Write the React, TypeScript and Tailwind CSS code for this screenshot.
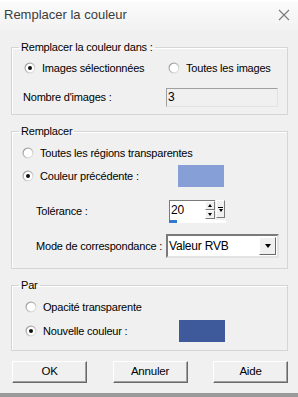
import React from 'react'

const font = { fontFamily: '"Liberation Sans", Arial, sans-serif' }

function Radio({ checked }: { checked?: boolean }) {
  return (
    <svg width="12" height="12" viewBox="0 0 12 12" className="shrink-0">
      <defs>
        <linearGradient id="rg" x1="0" y1="0" x2="1" y2="1">
          <stop offset="0" stopColor="#8a8a8a" />
          <stop offset="1" stopColor="#f4f4f4" />
        </linearGradient>
      </defs>
      <circle cx="6" cy="6" r="5.5" fill="url(#rg)" />
      <circle cx="6" cy="6" r="4.3" fill="#ffffff" />
      {checked && <circle cx="6" cy="6" r="2" fill="#111111" />}
    </svg>
  )
}

function Legend({ children }: { children: React.ReactNode }) {
  return <legend className="ml-[7px] px-[2px] leading-[14px] whitespace-nowrap">{children}</legend>
}

function Swatch({ color }: { color: string }) {
  return <div className={`w-[46px] h-[22px] shrink-0 ${color}`} />
}

function Button({ label }: { label: string }) {
  return (
    <button className="w-[75px] h-[22px] bg-[#f0f0f0] border border-t-white border-l-white border-r-[#696969] border-b-[#696969] shadow-[inset_-1px_-1px_0_#a0a0a0] leading-none text-[11.5px]">
      {label}
    </button>
  )
}

export default function App() {
  return (
    <div className="w-[298px] h-[397px] bg-[#f0f0f0] text-[11px] tracking-[-0.2px] text-black overflow-hidden flex flex-col border-b-[4px] border-b-[#9a9a9a] whitespace-nowrap" style={font}>
      {/* title bar */}
      <div className="h-[30px] flex items-center justify-between pl-[4px] pr-[8px] bg-gradient-to-b from-[#fbfbfb] to-[#f2f2f2] border-t-[2px] border-t-[#fdfdfd] tracking-normal">
        <span className="text-[13px] text-[#3c3c3c] pb-[2px]">Remplacer la couleur</span>
        <svg width="12" height="12" viewBox="0 0 12 12" className="mb-[3px]">
          <path d="M1 1 L11 11 M11 1 L1 11" stroke="#7a7a7a" strokeWidth="1.1" />
        </svg>
      </div>

      <div className="flex flex-col px-[11px] pt-[10px]">
        {/* group 1 */}
        <fieldset className="w-[277px] h-[75px] border border-[#d5d5d5] shadow-[inset_1px_1px_0_#ffffff]">
          <Legend>Remplacer la couleur dans :</Legend>
          <div className="flex items-center h-[16px] mt-[6px] pl-[12px]">
            <Radio checked />
            <span className="ml-[6px] w-[126px]">Images sélectionnées</span>
            <Radio />
            <span className="ml-[6px]">Toutes les images</span>
          </div>
          <div className="flex items-center mt-[12px] pl-[11px]">
            <span className="w-[143px]">Nombre d'images :</span>
            <div className="w-[112px] h-[19px] bg-[#f0f0f0] border border-[#a0a0a0] border-r-[#e3e3e3] border-b-[#e3e3e3] pl-[1px] leading-[17px] text-[12px]">
              3
            </div>
          </div>
        </fieldset>

        {/* group 2 */}
        <fieldset className="w-[277px] h-[145px] mt-[9px] border border-[#d5d5d5] shadow-[inset_1px_1px_0_#ffffff]">
          <Legend>Remplacer</Legend>
          <div className="flex items-center h-[16px] mt-[7px] pl-[10px]">
            <Radio />
            <span className="ml-[6px]">Toutes les régions transparentes</span>
          </div>
          <div className="flex items-center mt-[4px] pl-[10px]">
            <Radio checked />
            <span className="ml-[6px] w-[138px]">Couleur précédente :</span>
            <Swatch color="bg-[#869fd7]" />
          </div>
          <div className="flex items-start mt-[13px] pl-[24px]">
            <span className="w-[133px] pt-[3px]">Tolérance :</span>
            <div className="flex flex-col">
              <div className="flex items-start">
                <div className="w-[46px] h-[20px] bg-white border border-[#7a7a7a] border-r-0 border-b-0 flex">
                  <span className="pl-[1px] leading-[18px] flex-1 text-[12px]">20</span>
                  <div className="w-[10px] flex flex-col">
                    <div className="h-[9px] bg-[#f0f0f0] border border-t-white border-l-white border-r-[#7a7a7a] border-b-[#7a7a7a] flex items-center justify-center">
                      <div className="w-0 h-0 border-l-[2.5px] border-r-[2.5px] border-b-[3px] border-l-transparent border-r-transparent border-b-black" />
                    </div>
                    <div className="h-[9px] bg-[#f0f0f0] border border-t-white border-l-white border-r-[#7a7a7a] border-b-[#7a7a7a] flex items-center justify-center">
                      <div className="w-0 h-0 border-l-[2.5px] border-r-[2.5px] border-t-[3px] border-l-transparent border-r-transparent border-t-black" />
                    </div>
                  </div>
                </div>
                <div className="ml-[1px] w-[9px] h-[18px] bg-[#f0f0f0] border border-t-white border-l-white border-r-[#7a7a7a] border-b-[#7a7a7a] flex flex-col items-center justify-center gap-[1px]">
                  <div className="w-[5px] h-px bg-black" />
                  <div className="w-0 h-0 border-l-[2.5px] border-r-[2.5px] border-t-[3px] border-l-transparent border-r-transparent border-t-black" />
                </div>
              </div>
              <div className="w-[57px] h-[3px] bg-white flex">
                <div className="w-[8px] h-[3px] bg-[#2e7bd0]" />
              </div>
            </div>
          </div>
          <div className="flex items-center mt-[11px] pl-[24px]">
            <span className="w-[130px]">Mode de correspondance :</span>
            <div className="w-[113px] h-[24px] bg-white border-2 border-t-[#7a7a7a] border-l-[#7a7a7a] border-r-[#e3e3e3] border-b-[#e3e3e3] flex items-center">
              <span className="flex-1 pl-[1px] text-[12px]">Valeur RVB</span>
              <div className="w-[17px] h-[18px] mr-[1px] bg-[#f0f0f0] border border-t-white border-l-white border-r-[#696969] border-b-[#696969] flex items-center justify-center">
                <div className="w-0 h-0 border-l-[3.5px] border-r-[3.5px] border-t-[4px] border-l-transparent border-r-transparent border-t-black" />
              </div>
            </div>
          </div>
        </fieldset>

        {/* group 3 */}
        <fieldset className="w-[277px] h-[73px] mt-[9px] border border-[#d5d5d5] shadow-[inset_1px_1px_0_#ffffff]">
          <Legend>Par</Legend>
          <div className="flex items-center h-[16px] mt-[7px] pl-[13px]">
            <Radio />
            <span className="ml-[6px]">Opacité transparente</span>
          </div>
          <div className="flex items-center mt-[5px] pl-[13px]">
            <Radio checked />
            <span className="ml-[6px] w-[136px]">Nouvelle couleur :</span>
            <Swatch color="bg-[#3e5a9a]" />
          </div>
        </fieldset>

        {/* buttons */}
        <div className="flex justify-between w-[276px] mt-[10px] ml-[1px]">
          <Button label="OK" />
          <Button label="Annuler" />
          <Button label="Aide" />
        </div>
      </div>
    </div>
  )
}
